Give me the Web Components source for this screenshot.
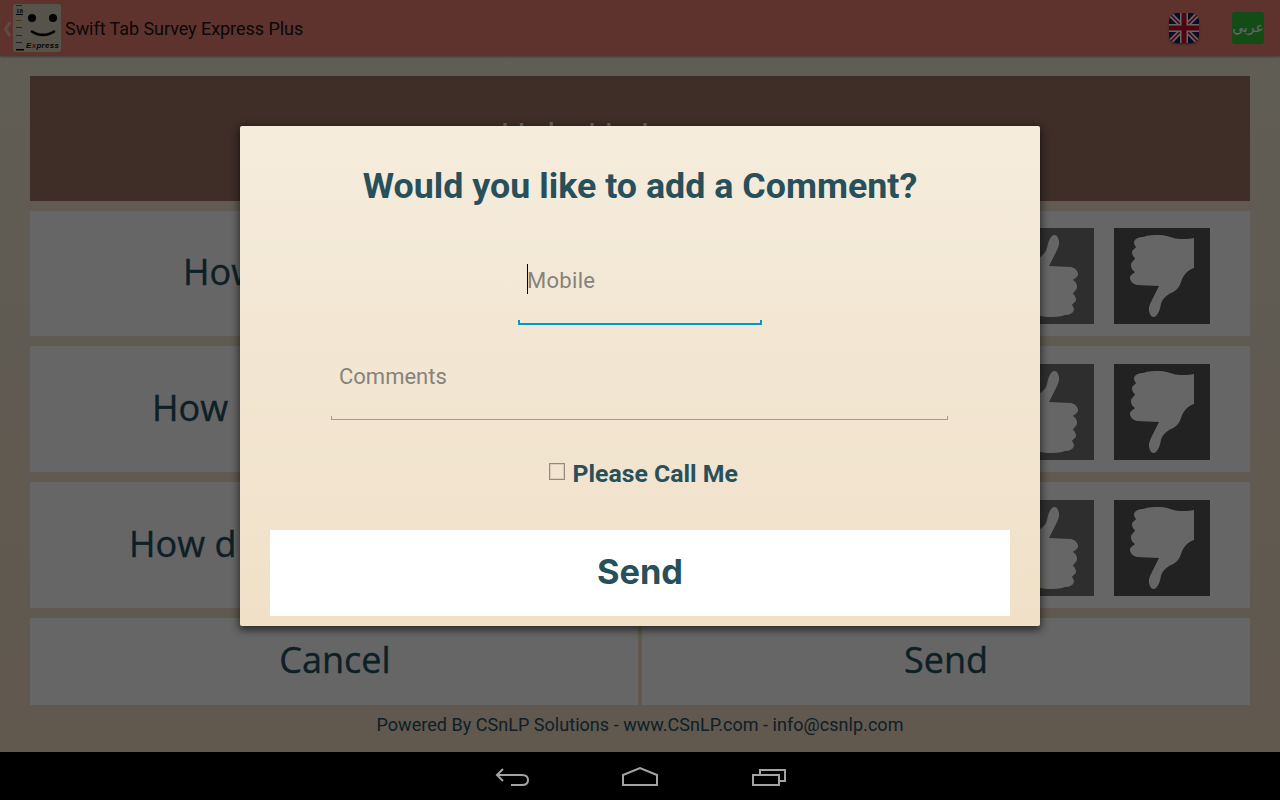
<!DOCTYPE html>
<html lang="en">
<head>
<meta charset="utf-8">
<title>Swift Tab Survey Express Plus</title>
<style>
  html, body { margin: 0; padding: 0; background: #000; }
  body { width: 1280px; height: 800px; overflow: hidden; font-family: "Open Sans", sans-serif; }
</style>
</head>
<body>
<tablet-screen>
  <action-bar></action-bar>
  <survey-panel>
    <survey-row text="How w" indent="153" height="125" tile-top="17"></survey-row>
    <survey-row text="How" indent="122" height="126" tile-top="18"></survey-row>
    <survey-row text="How d" indent="99" height="126" tile-top="18"></survey-row>
  </survey-panel>
  <comment-dialog slot="overlay"></comment-dialog>
</tablet-screen>
<nav-bar></nav-bar>

<script>
// thumb outline, drawn pointing down in a 96x96 box. The up version is the same path turned 180deg
const THUMB_PATH = "M80 10V40C73 42 69 48 67 54C65 60 62 63 57 65C51 68 48 72 47 76C46 81 45 85 42 88C40 90 37 89 36 86C34 82 35 78 37 74L45 58L23 57C19 56 16 53 16 50C16 47 19 46 21 44C18 42 17 40 17 37C17 34 20 33 21 30C19 29 18 26 18 24C18 22 21 21 22 19C21 18 20 16 20 14C21 10 26 9 29 9C35 7 40 7 46 7C53 7 60 11 66 11C71 11 76 11 80 10Z";

class TabletScreen extends HTMLElement {
  constructor() {
    super();
    this.attachShadow({ mode: "open" });
    this.shadowRoot.innerHTML = `
      <style>
        :host {
          display: block;
          position: relative;
          width: 1280px;
          height: 752px;
          overflow: hidden;
          background: linear-gradient(#efead6, #f2dcc4);
        }
        .scrim {
          position: absolute;
          inset: 0;
          background: rgba(0, 0, 0, 0.6);
          display: flex;
          justify-content: center;
          align-items: flex-start;
          padding-top: 126px;
          box-sizing: border-box;
        }
      </style>
      <slot></slot>
      <div class="scrim"><slot name="overlay"></slot></div>
    `;
  }
}

class ActionBar extends HTMLElement {
  constructor() {
    super();
    this.attachShadow({ mode: "open" });
    this.shadowRoot.innerHTML = `
      <style>
        :host {
          display: flex;
          align-items: center;
          height: 56px;
          background: #ee8070;
          box-shadow: 0 1px 2px rgba(0, 0, 0, 0.35);
          position: relative;
          font-family: Roboto, sans-serif;
        }
        .back { width: 13px; height: 16px; flex: none; margin-top: 1px; }
        .logo { width: 48px; height: 48px; flex: none; }
        .title { font-size: 18px; letter-spacing: -0.05px; color: #141414; margin-left: 4px; flex: 1; white-space: nowrap; }
        .flag { width: 30px; height: 30px; flex: none; margin-right: 33px; border-radius: 7px; box-shadow: 0 1px 2px rgba(0,0,0,.5); }
        .arabic {
          width: 32px;
          height: 32px;
          flex: none;
          margin-right: 16px;
          background: #32be3c;
          border-radius: 3px;
          color: #fff;
          font: 14px/30px "DejaVu Sans", sans-serif;
          text-align: center;
        }
      </style>
      <svg class="back" viewBox="0 0 13 16"><polyline points="10,1 5.5,8 10,15" fill="none" stroke="#f5e6dc" stroke-opacity=".55" stroke-width="3"/></svg>
      <svg class="logo" viewBox="0 0 48 48">
        <rect width="48" height="48" rx="3" fill="#d6d2b8"/>
        <rect x="3" y="1" width="6" height="1" fill="#5a4a8a"/>
        <text x="3" y="9" font-family="Liberation Serif" font-size="7" font-weight="700" fill="#111">18</text>
        <rect x="3" y="10" width="7" height="1" fill="#111"/>
        <rect x="3" y="16" width="6" height="1" fill="#d08020"/>
        <rect x="3" y="23" width="6" height="1" fill="#4a5a9a"/>
        <rect x="3" y="31" width="6" height="1" fill="#b04030"/>
        <rect x="3" y="38" width="6" height="1" fill="#5a4a8a"/>
        <rect x="3" y="45" width="8" height="1.5" fill="#000"/>
        <circle cx="19" cy="14" r="4" fill="#000"/>
        <circle cx="40" cy="14" r="4" fill="#000"/>
        <path d="M19 27.5C25 32 35 32 41 27.5" fill="none" stroke="#000" stroke-width="2.6" stroke-linecap="round"/>
        <text x="13" y="44" font-family="Liberation Sans" font-size="8" font-weight="700" font-style="italic" fill="#111" letter-spacing=".3">E<tspan fill="#c01818">x</tspan>press</text>
      </svg>
      <span class="title">Swift Tab Survey Express Plus</span>
      <svg class="flag" viewBox="0 0 30 30">
        <defs><clipPath id="c"><rect width="30" height="30" rx="7"/></clipPath></defs>
        <g clip-path="url(#c)">
          <rect width="30" height="30" fill="#1c1f5e"/>
          <path d="M0 0L30 30M30 0L0 30" stroke="#fff" stroke-width="5"/>
          <path d="M0 0L30 30M30 0L0 30" stroke="#c8102e" stroke-width="1.6"/>
          <path d="M15 0V30M0 15H30" stroke="#fff" stroke-width="8"/>
          <path d="M15 0V30M0 15H30" stroke="#c8102e" stroke-width="5"/>
        </g>
      </svg>
      <div class="arabic" lang="ar" dir="rtl">عربي</div>
    `;
  }
}

class SurveyPanel extends HTMLElement {
  constructor() {
    super();
    this.attachShadow({ mode: "open" });
    this.shadowRoot.innerHTML = `
      <style>
        :host {
          display: flex;
          flex-direction: column;
          gap: 10px;
          padding: 20px 30px 0;
          color: #245060;
          font-family: "Open Sans", sans-serif;
        }
        .heading {
          height: 125px;
          box-sizing: border-box;
          padding-bottom: 6px;
          background: #9d7061;
          color: #fff;
          font-size: 36px;
          display: flex;
          align-items: center;
          justify-content: center;
        }
        .actions { display: grid; grid-template-columns: 1fr 1fr; gap: 4px; height: 87px; }
        .actions div {
          background: #fff;
          font-size: 36px;
          -webkit-text-stroke: 0.4px currentColor;
          display: flex;
          align-items: center;
          justify-content: center;
          padding-bottom: 4px;
          box-sizing: border-box;
        }
        .actions div:first-child { padding-left: 2px; }
        .footer {
          margin-top: -10px;
          height: 40px;
          font: 18px/40px Roboto, sans-serif;
          letter-spacing: 0.035px;
          text-align: center;
        }
      </style>
      <div class="heading">Help Us Improve</div>
      <slot></slot>
      <div class="actions"><div>Cancel</div><div>Send</div></div>
      <div class="footer">Powered By CSnLP Solutions - www.CSnLP.com - info@csnlp.com</div>
    `;
  }
}

class SurveyRow extends HTMLElement {
  connectedCallback() {
    const text = this.getAttribute("text") || "";
    const indent = this.getAttribute("indent") || 0;
    const height = this.getAttribute("height") || 126;
    const tileTop = this.getAttribute("tile-top") || 18;
    this.attachShadow({ mode: "open" });
    this.shadowRoot.innerHTML = `
      <style>
        :host {
          display: flex;
          height: ${height}px;
          background: #fff;
          padding-right: 40px;
          gap: 20px;
          font-size: 36px;
        }
        .q { flex: 1; display: flex; align-items: center; padding-left: ${indent}px; white-space: nowrap; padding-bottom: 4px; -webkit-text-stroke: 0.4px currentColor; }
        svg { width: 96px; height: 96px; margin-top: ${tileTop}px; flex: none; }
      </style>
      <div class="q">${text}</div>
      <svg viewBox="0 0 96 96"><rect width="96" height="96" fill="#737373"/><path d="${THUMB_PATH}" fill="#fff" transform="rotate(180 48 48)"/></svg>
      <svg viewBox="0 0 96 96"><rect width="96" height="96" fill="#555"/><path d="${THUMB_PATH}" fill="#fff"/></svg>
    `;
  }
}

class TextField extends HTMLElement {
  connectedCallback() {
    const focused = this.hasAttribute("focused");
    this.attachShadow({ mode: "open" });
    this.shadowRoot.innerHTML = `
      <style>
        :host {
          display: block;
          position: relative;
          height: 69px;
          width: ${this.getAttribute("width")}px;
          box-sizing: border-box;
          padding-left: ${focused ? 9 : 8}px;
          margin-left: ${focused ? 0 : -1}px;
          font: 22px/${focused ? 50 : 51}px Roboto, sans-serif;
          letter-spacing: ${focused ? 0.3 : 0}px;
          color: #85837b;
          border-bottom: ${focused ? "2px solid #0099cc" : "1px solid #a69a88"};
        }
        :host::before, :host::after {
          content: "";
          position: absolute;
          bottom: 0;
          height: 3px;
          width: ${focused ? 2 : 1}px;
          background: ${focused ? "#0099cc" : "#a69a88"};
        }
        :host::before { left: 0; }
        :host::after { right: 0; }
        .caret { position: absolute; left: 9px; top: 8px; width: 1px; height: 30px; background: #000; }
      </style>
      ${focused ? '<div class="caret"></div>' : ""}
      <slot></slot>
    `;
  }
}

class CommentDialog extends HTMLElement {
  constructor() {
    super();
    this.attachShadow({ mode: "open" });
    this.shadowRoot.innerHTML = `
      <style>
        :host {
          display: flex;
          flex-direction: column;
          align-items: center;
          width: 800px;
          height: 500px;
          box-sizing: border-box;
          padding: 39px 30px 10px;
          background: linear-gradient(#f5ecdc, #f0e0c8);
          border-radius: 2px;
          box-shadow: 0 3px 8px 1px rgba(0, 0, 0, 0.6);
          color: #27505a;
          font-family: Roboto, sans-serif;
        }
        h1 { margin: 0 0 49px; font-size: 35.8px; line-height: 42px; font-weight: 700; }
        .gap { height: 26px; flex: none; }
        .check { display: flex; align-items: center; gap: 7.5px; height: 28px; margin: 39px 0 43px 7px; font-size: 24.8px; font-weight: 700; }
        .box { width: 16px; height: 17px; box-sizing: border-box; border: 1px solid #918b7f; outline: 1px solid rgba(145,139,127,.25); outline-offset: -2px; margin-top: -3px; }
        .send {
          align-self: stretch;
          height: 86px;
          background: #fff;
          font: 700 34.4px/83px Inter, sans-serif;
          text-align: center;
        }
      </style>
      <h1>Would you like to add a Comment?</h1>
      <text-field width="244" focused>Mobile</text-field>
      <div class="gap"></div>
      <text-field width="617">Comments</text-field>
      <div class="check"><span class="box"></span><span>Please Call Me</span></div>
      <div class="send">Send</div>
    `;
  }
}

class NavBar extends HTMLElement {
  constructor() {
    super();
    this.attachShadow({ mode: "open" });
    this.shadowRoot.innerHTML = `
      <style>
        :host { display: flex; justify-content: center; height: 48px; background: #000; }
        svg { width: 128px; height: 48px; fill: none; stroke: #a3a3a3; stroke-width: 2; }
      </style>
      <svg viewBox="0 0 128 48"><path d="M55 17L49 23L55 29M49 23H74C78 23 80 25 80 28C80 31 78 33 74 33H63"/></svg>
      <svg viewBox="0 0 128 48"><path d="M47 33V23L64 16L81 23V33Z"/></svg>
      <svg viewBox="0 0 128 48"><path d="M49 23H75V33H49ZM56 22V18H81V29H76"/></svg>
    `;
  }
}

customElements.define("tablet-screen", TabletScreen);
customElements.define("action-bar", ActionBar);
customElements.define("survey-panel", SurveyPanel);
customElements.define("survey-row", SurveyRow);
customElements.define("text-field", TextField);
customElements.define("comment-dialog", CommentDialog);
customElements.define("nav-bar", NavBar);
</script>
</body>
</html>
